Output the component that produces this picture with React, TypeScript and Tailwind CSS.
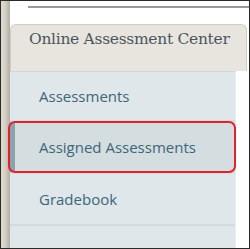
import React from "react";

// ─── メニュー項目 ────────────────────────────────────────────────────────────
const ITEMS = [
  { label: "Assessments", h: "h-[48px]", active: false },
  { label: "Assigned Assessments", h: "h-[50px]", active: true },
  { label: "Gradebook", h: "h-[50px]", active: false },
];

export default function App() {
  return (
    <div className="w-[250px] h-[249px] border border-[#2a2a2a] flex bg-white overflow-hidden">
      {/* 左の帯 */}
      <div className="w-[9px] shrink-0 bg-gradient-to-r from-[#e2ddd3] via-[#d3cec4] to-[#b3aea5]" />

      <div className="flex-1 flex flex-col min-w-0">
        {/* 上部の罫線 */}
        <div className="h-[23px] shrink-0 pt-[5px]">
          <div className="ml-[18px] h-[2px] bg-[#9a9a9a]" />
        </div>

        {/* タブ見出し */}
        <div className="h-[47px] shrink-0 mr-[2px] rounded-t-[6px] border border-b-0 border-[#d2cdc4] bg-[#e8e5de]">
          <div
            className="pl-[18px] pt-[3px] text-[15.5px] leading-[22px] tracking-[-0.3px] text-[#4c5560]"
            style={{ fontFamily: '"DejaVu Serif", "Liberation Serif", serif' }}
          >
            Online Assessment Center
          </div>
        </div>

        {/* メニュー */}
        <div className="flex-1 flex">
          <div className="w-[226px] bg-[#dfe7ea] border-r border-[#e8eef0] border-t border-t-[#d3d6d4]">
            {ITEMS.map((it) => (
              <div key={it.label} className="relative border-b-2 border-[#d3dcdf]">
                <div
                  className={
                    it.active
                      ? `${it.h} flex items-center pl-[24px] bg-[#d4dde0] border-l-[5px] border-[#8aa3ad] text-[15px] text-[#3e6679]`
                      : `${it.h} flex items-center pl-[29px] text-[15px] text-[#3e6679]`
                  }
                  style={{ fontFamily: '"Open Sans", "Liberation Sans", sans-serif' }}
                >
                  {it.label}
                </div>
                {it.active && (
                  <div className="absolute -left-[2px] -right-[1px] -top-[1px] -bottom-[1px] rounded-[7px] border-2 border-[#e2212b]" />
                )}
              </div>
            ))}
          </div>
        </div>
      </div>
    </div>
  );
}
